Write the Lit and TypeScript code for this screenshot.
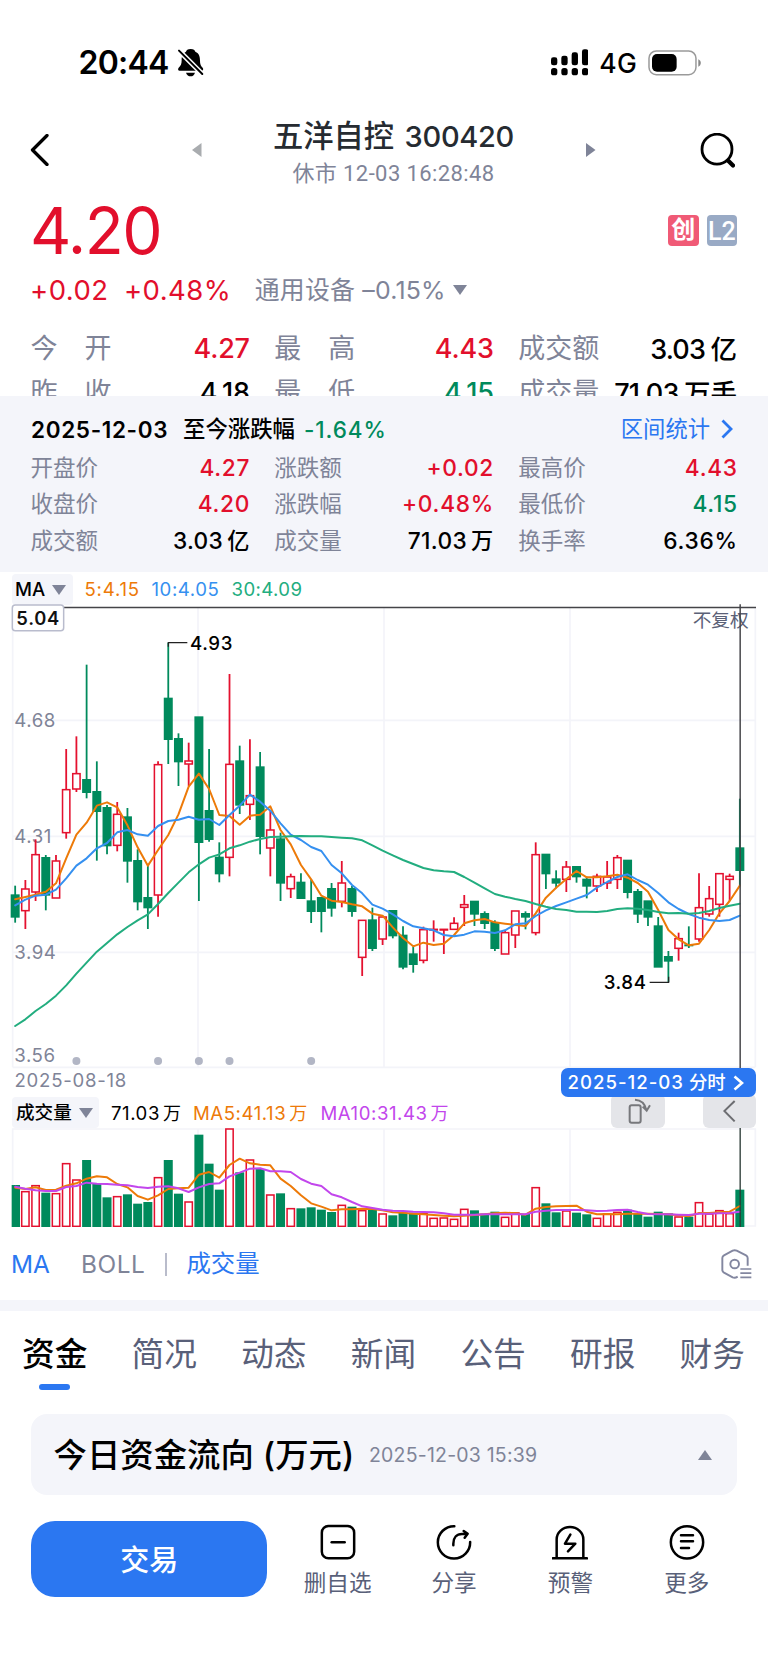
import { LitElement, html, svg, css } from "lit";
import { customElement } from "lit/decorators.js";

type Tone = "up" | "down" | "flat";
/** direction, high, body top, body bottom, low (chart units, three per pixel) */
type Candle = ["u" | "d", number, number, number, number];

const CANDLES: Candle[] = [
  ["d", 857, 884, 952, 968], ["u", 840, 866, 933, 987], ["u", 718, 763, 877, 903], ["d", 765, 772, 886, 931],
  ["u", 765, 782, 895, 895], ["u", 447, 568, 699, 716], ["u", 409, 520, 568, 576], ["d", 194, 538, 578, 595],
  ["d", 484, 574, 635, 782], ["d", 615, 622, 738, 763], ["u", 606, 642, 737, 754], ["d", 624, 650, 784, 848],
  ["d", 748, 781, 906, 931], ["d", 797, 892, 924, 987], ["u", 484, 493, 886, 950], ["d", 128, 294, 419, 492],
  ["d", 400, 415, 486, 558], ["u", 428, 482, 493, 558], ["d", 350, 350, 728, 903], ["d", 447, 631, 719, 725],
  ["d", 727, 771, 822, 847], ["u", 222, 492, 773, 829], ["d", 437, 482, 616, 642], ["u", 418, 586, 614, 660],
  ["d", 456, 500, 710, 763], ["u", 632, 689, 745, 829], ["d", 698, 716, 850, 903], ["u", 821, 829, 867, 894],
  ["d", 820, 846, 896, 896], ["d", 838, 902, 935, 969], ["d", 892, 892, 935, 997], ["d", 849, 865, 925, 950],
  ["u", 783, 848, 905, 922], ["d", 858, 865, 935, 950], ["u", 960, 960, 1073, 1128], ["d", 923, 959, 1046, 1053],
  ["u", 950, 950, 1018, 1035], ["d", 931, 931, 1008, 1015], ["d", 979, 1005, 1102, 1108], ["d", 1040, 1061, 1094, 1118],
  ["u", 980, 988, 1082, 1090], ["u", 961, 987, 991, 1025], ["u", 987, 987, 991, 1062], ["u", 952, 969, 989, 989],
  ["u", 885, 913, 923, 978], ["d", 903, 903, 943, 978], ["d", 934, 940, 971, 987], ["d", 961, 967, 1046, 1053],
  ["u", 990, 997, 1063, 1063], ["u", 932, 932, 1006, 1044], ["d", 934, 940, 952, 988], ["u", 727, 763, 999, 1006],
  ["d", 762, 762, 822, 867], ["d", 811, 836, 850, 865], ["u", 783, 800, 839, 876], ["d", 799, 799, 831, 848],
  ["d", 830, 837, 859, 895], ["u", 821, 828, 859, 876], ["u", 783, 830, 850, 867], ["u", 765, 772, 839, 867],
  ["d", 780, 780, 878, 895], ["d", 867, 874, 943, 969], ["d", 902, 902, 952, 978], ["d", 951, 977, 1102, 1102],
  ["d", 1053, 1069, 1084, 1146], ["u", 998, 1015, 1046, 1082], ["d", 979, 1034, 1038, 1044], ["u", 820, 922, 1018, 1025],
  ["u", 858, 895, 943, 950], ["u", 820, 820, 914, 950], ["u", 821, 828, 839, 903], ["d", 596, 743, 812, 857],
];

const MA5 = [898, 891, 884, 875, 850, 775, 704, 668, 617, 607, 622, 676, 742, 797, 750, 705, 643, 560, 521, 567, 645, 648, 674, 647, 644, 619, 690, 733, 795, 838, 887, 902, 906, 913, 919, 941, 947, 982, 1014, 1039, 1028, 1035, 1031, 1005, 970, 961, 957, 967, 971, 975, 978, 940, 893, 863, 837, 813, 832, 832, 829, 824, 833, 849, 875, 930, 990, 1018, 1036, 1031, 990, 940, 903, 857];
const MA10 = [916, 899, 887, 884, 869, 835, 797, 775, 745, 729, 697, 690, 703, 707, 678, 663, 659, 650, 659, 657, 675, 645, 617, 584, 605, 632, 670, 704, 720, 741, 753, 795, 820, 855, 880, 914, 926, 943, 963, 979, 985, 991, 1005, 1009, 1004, 994, 995, 999, 991, 973, 970, 948, 931, 918, 907, 896, 885, 863, 846, 831, 823, 840, 854, 879, 907, 927, 942, 953, 960, 963, 960, 947];
const MA30 = [1278, 1258, 1233, 1212, 1187, 1156, 1121, 1088, 1055, 1029, 1003, 981, 961, 943, 912, 879, 848, 817, 793, 773, 763, 745, 736, 725, 717, 711, 710, 709, 708, 709, 709, 711, 713, 715, 721, 736, 752, 766, 780, 792, 804, 811, 814, 816, 831, 848, 865, 882, 890, 897, 903, 912, 920, 927, 930, 935, 935, 936, 933, 927, 925, 926, 930, 936, 940, 939, 941, 939, 933, 924, 917, 911];
const VOL = [376, 393, 375, 399, 399, 309, 358, 301, 371, 413, 408, 404, 432, 427, 351, 301, 402, 424, 225, 312, 390, 205, 338, 298, 328, 403, 401, 444, 446, 443, 450, 457, 434, 441, 450, 450, 460, 467, 459, 459, 459, 473, 472, 476, 446, 452, 462, 456, 470, 457, 463, 381, 431, 458, 451, 459, 464, 473, 460, 455, 450, 461, 471, 456, 461, 469, 471, 426, 460, 450, 459, 390];
const VMA5 = [383, 387, 382, 390, 389, 377, 370, 356, 349, 352, 372, 382, 408, 419, 406, 387, 385, 383, 344, 336, 353, 315, 296, 310, 314, 316, 356, 378, 406, 430, 440, 451, 448, 448, 446, 447, 451, 457, 458, 461, 463, 465, 467, 469, 467, 465, 463, 460, 458, 460, 464, 446, 441, 439, 438, 437, 455, 463, 462, 463, 461, 461, 461, 462, 463, 466, 469, 459, 459, 457, 455, 438];
const VMA10 = [380, 386, 391, 393, 393, 381, 378, 368, 371, 372, 374, 376, 381, 384, 380, 379, 385, 396, 382, 372, 370, 349, 338, 326, 325, 334, 334, 336, 357, 371, 378, 403, 412, 426, 439, 444, 449, 452, 453, 455, 456, 457, 460, 464, 464, 464, 463, 463, 463, 463, 463, 455, 452, 450, 450, 450, 451, 453, 452, 450, 449, 456, 462, 463, 463, 464, 465, 461, 461, 460, 459, 455];

const cx = (i: number) => 45.5 + i * 30.62;
const poly = (ys: number[]) => ys.map((y, i) => `${cx(i).toFixed(1)},${y}`).join(" ");

@customElement("price-chart")
class PriceChart extends LitElement {
  static styles = css`
    :host { display: block; height: 461px; }
    svg { display: block; overflow: visible; font-family: Inter, "Noto Sans CJK SC", sans-serif; }
    .grid { stroke: #f3f4f9; stroke-width: 5; fill: none; }
    .u { fill: none; stroke: #e4112f; stroke-width: 4.6; }
    .d { fill: #008a5c; }
    .wu { stroke: #e4112f; stroke-width: 5.4; }
    .wd { stroke: #008a5c; stroke-width: 5.4; }
    .ma { fill: none; stroke-width: 6; stroke-linejoin: round; stroke-linecap: round; }
    .a { stroke: #ed7a08; }
    .b { stroke: #3590f0; }
    .c { stroke: #22ad7f; }
    .axis { fill: #7f8497; font-size: 56px; letter-spacing: 1.6px; }
    .mark { fill: #000; font-size: 56px; font-weight: 500; letter-spacing: 1.8px; }
    .lead { stroke: #222; stroke-width: 3.6; fill: none; }
    .cross { stroke: #444448; stroke-width: 4.4; }
    .dot { fill: #b2b6c5; }
    .max { fill: #fff; stroke: #b9bccd; stroke-width: 4.5; }
    .maxt { fill: #111; font-size: 55px; font-weight: 600; letter-spacing: 2.2px; }
    .adj { fill: #5b6177; font-size: 56px; }
  `;
  render() {
    return html`<svg width="768" height="461" viewBox="0 21 2304 1383">
      <path class="grid" d="M38 21V1402M594 21V1402M1152 21V1402M1710 21V1402M2266 21V1402M38 361H2266M38 709H2266M38 1057H2266M38 1402H2266" />
      ${[["4.68", 381], ["4.31", 730], ["3.94", 1078], ["3.56", 1387]].map(([t, y]) => svg`<text class="axis" x="43" y=${y}>${t}</text>`)}
      ${CANDLES.map(([k, h, t, b, l], i) => svg`
        ${h < t ? svg`<line class="w${k}" x1=${cx(i)} x2=${cx(i)} y1=${h} y2=${t + 1} />` : ""}
        ${l > b ? svg`<line class="w${k}" x1=${cx(i)} x2=${cx(i)} y1=${b - 1} y2=${l} />` : ""}
        ${k === "u"
          ? svg`<rect class="u" x=${cx(i) - 11} y=${t + 1} width="22" height=${Math.max(1, b - t - 2)} />`
          : svg`<rect class="d" x=${cx(i) - 13.5} y=${t - 1} width="27" height=${b - t + 2} />`}`)}
      <polyline class="ma a" points=${poly(MA5)} />
      <polyline class="ma b" points=${poly(MA10)} />
      <polyline class="ma c" points=${poly(MA30)} />
      <path class="lead" d="M505 140V128H562M2006 1130V1147H1949" />
      <text class="mark" x="570" y="149">4.93</text>
      <text class="mark" x="1811" y="1168">3.84</text>
      ${[6, 14, 18, 21, 29].map((i) => svg`<circle class="dot" cx=${cx(i)} cy="1383" r="12" />`)}
      <text class="adj" x="2078" y="81">不复权</text>
      <line class="cross" x1="38" x2="2268" y1="22.5" y2="22.5" />
      <line class="cross" x1="2220.5" x2="2220.5" y1="13" y2="1404" />
      <rect class="max" x="37" y="15" width="154" height="77" rx="9" />
      <text class="maxt" x="49" y="74">5.04</text>
    </svg>`;
  }
}

@customElement("volume-chart")
class VolumeChart extends LitElement {
  static styles = css`
    :host { display: block; height: 99px; }
    svg { display: block; }
    .grid { stroke: #f3f4f9; stroke-width: 5; fill: none; }
    .u { fill: #fff; stroke: #e4112f; stroke-width: 4.6; }
    .d { fill: #008a5c; }
    .ma { fill: none; stroke-width: 6; stroke-linejoin: round; stroke-linecap: round; }
    .a { stroke: #ed7a08; }
    .b { stroke: #c246ec; }
    .cross { stroke: #2b3a35; stroke-width: 4; }
  `;
  render() {
    return html`<svg width="768" height="99" viewBox="0 204 2304 297">
      <path class="grid" d="M38 207H2266V498H38ZM594 207V498M1152 207V498M1710 207V498" />
      ${VOL.map((y, i) => CANDLES[i][0] === "u"
        ? svg`<rect class="u" x=${cx(i) - 11} y=${y + 2} width="22" height=${497 - y} />`
        : svg`<rect class="d" x=${Math.max(35, cx(i) - 13.5)} y=${y - 1} width=${i ? 27 : 25} height=${502 - y} />`)}
      <polyline class="ma a" points=${poly(VMA5)} />
      <polyline class="ma b" points=${poly(VMA10)} />
      <line class="cross" x1="2220.5" x2="2220.5" y1="204" y2="501" />
    </svg>`;
  }
}

const STATS: [string, string, string, Tone][] = [
  ["今开", "4.27", "", "up"], ["最高", "4.43", "", "up"], ["成交额", "3.03", "亿", "flat"],
  ["昨收", "4.18", "", "flat"], ["最低", "4.15", "", "down"], ["成交量", "71.03", "万手", "flat"],
];
const DAY: [string, string, string, Tone][] = [
  ["开盘价", "4.27", "", "up"], ["涨跌额", "+0.02", "", "up"], ["最高价", "4.43", "", "up"],
  ["收盘价", "4.20", "", "up"], ["涨跌幅", "+0.48%", "", "up"], ["最低价", "4.15", "", "down"],
  ["成交额", "3.03", "亿", "flat"], ["成交量", "71.03", "万", "flat"], ["换手率", "6.36%", "", "flat"],
];
const TABS = ["资金", "简况", "动态", "新闻", "公告", "研报", "财务"];

const ACTIONS = [
  { label: "删自选", box: "89 70 108 108", art: svg`<rect x="94.5" y="76" width="97" height="97" rx="20"/><path d="M124 125H163"/>` },
  { label: "分享", box: "438 70 108 108", art: svg`<path d="M493 76.500A48.500 48.500 0 1 0 540.500 124"/><path d="M490 134V129C490 111 500 100 516 100H530M521 91L533 99.500L524 111"/>` },
  { label: "预警", box: "788 70 108 108", art: svg`<path d="M802 171V116A40 37 0 0 1 882 116V171M790 173H893M843 102L827 129H858L836 152"/>` },
  { label: "更多", box: "1137 70 108 108", art: svg`<circle cx="1191" cy="125" r="48.500"/><path d="M1173 104H1209M1173 122H1209M1173 142H1197"/>` },
];

@customElement("app-root")
class AppRoot extends LitElement {
  static styles = css`
    :host { display: block; width: 768px; height: 1670px; overflow: hidden; background: #fff; color: #000;
      font-family: Inter, "Noto Sans CJK SC", sans-serif; --up: #e20f2c; --down: #008a5c; --grey: #7f8498; --blue: #2b77f1; --pale: #f4f5fa; }
    * { box-sizing: border-box; }
    svg { display: block; flex: none; }
    .up { color: var(--up); } .down { color: var(--down); }

    .status { height: 112px; padding: 13px 67px 0 78.500px; display: flex; align-items: center; }
    .time { font-size: 32px; font-weight: 600; letter-spacing: -.75px; width: 98.500px; }
    .signal { margin-left: auto; }
    .net { font-size: 26.500px; font-weight: 500; letter-spacing: .3px; width: 59.500px; padding-left: 11px; }

    .head { height: 76px; display: flex; align-items: center; padding: 0 33px 0 29.500px; }
    .prev { margin-left: 143px; }
    .title { width: 384px; align-self: flex-start; text-align: center; white-space: nowrap; }
    .name { font-size: 29px; font-weight: 500; line-height: 38px; margin-top: 5px; color: #262b31; letter-spacing: -.3px; }
    .name span { font-size: 30.300px; letter-spacing: 0; margin-right: 3px; }
    .time2 { font-size: 22px; line-height: 34px; color: var(--grey); font-family: Roboto, "Noto Sans CJK SC", sans-serif; letter-spacing: .4px; margin-top: 1px; }
    .find { margin-left: auto; }

    .quote { height: 83px; padding: 0 31px 0 30px; display: flex; align-items: center; justify-content: space-between; }
    .price { font-size: 64px; letter-spacing: -1.500px; line-height: 83px; padding-top: 1px; }
    .badges { display: flex; gap: 8px; margin-bottom: -1px; }
    .badge { width: 30.500px; height: 31px; border-radius: 4px; color: #fff; display: grid; place-items: center; line-height: 30px; }
    .chuang { background: #f05a76; font-size: 24px; font-weight: 700; }
    .l2 { background: #99aac5; font: 500 25px/31px Roboto, sans-serif; padding-top: 1px; }

    .change { height: 38px; padding-left: 30px; display: flex; align-items: center; font-size: 27.500px; line-height: 38px; letter-spacing: .45px; }
    .change .pct { margin-left: 15.500px; }
    .sector { margin-left: 23.500px; font-size: 24.900px; letter-spacing: .2px; color: var(--grey); white-space: pre; margin-right: 7px; }

    .stats { height: 87px; overflow: hidden; padding: 18px 31px 0; display: grid; grid-template-columns: repeat(3, 1fr); column-gap: 25.500px; grid-auto-rows: 43.500px; font-size: 27px; line-height: 44px; }
    .cell { display: flex; justify-content: space-between; white-space: nowrap; }
    .label { color: var(--grey); display: flex; justify-content: space-between; margin-left: -.5px; }
    .stats .label { width: 81px; }
    .val { font-weight: 500; letter-spacing: -.2px; margin-right: -.5px; }
    .val.u { letter-spacing: -.85px; margin-right: 0; }
    .unit { margin-left: 5.500px; letter-spacing: 0; }
    .stats .unit { font-size: 26.500px; }

    .day { height: 176px; background: var(--pale); padding: 15px 31px 0; font-size: 22.500px; }
    .dayhead { height: 37px; display: flex; align-items: center; font-size: 22px; line-height: 35px; font-weight: 500; white-space: nowrap; padding-bottom: 1px; }
    .date { font-weight: 600; font-size: 22.500px; letter-spacing: .65px; width: 152px; }
    .since { width: 121px; font-size: 22.400px; padding-bottom: 1px; }
    .dayhead .down { font-size: 22.500px; letter-spacing: .9px; }
    .link { margin-left: auto; color: var(--blue); font-weight: 400; display: flex; align-items: center; gap: 10px; font-size: 22.300px; margin-right: 3px; padding-bottom: 2px; }
    .link svg { margin-top: 2px; }
    .grid3 { display: grid; grid-template-columns: repeat(3, 1fr); column-gap: 25.500px; grid-auto-rows: 36.700px; line-height: 36.700px; margin-top: 1.500px; }
    .grid3 .val { font-size: 22.700px; letter-spacing: .7px; margin-right: -.8px; }
    .grid3 .val.u { letter-spacing: .35px; margin-right: 0; }
    .grid3 .unit { margin-left: 4px; font-size: 22.200px; letter-spacing: 0; }

    .legend { height: 35px; padding: 2px 0 0 12px; display: flex; align-items: flex-start; font-size: 18.600px; line-height: 31px; white-space: nowrap; }
    .chip { background: var(--pale); border-radius: 4px; height: 31px; display: flex; align-items: center; font-weight: 500; }
    .chip.ma { width: 60.500px; padding-left: 3px; gap: 7px; letter-spacing: 0; }
    .chip.vo { width: 87px; padding-left: 4px; gap: 7px; font-size: 18.600px; }
    .k5 { color: #ed7a08; width: 67px; margin-left: 12px; letter-spacing: .8px; }
    .k10 { color: #3590f0; width: 80px; letter-spacing: .55px; }
    .k30 { color: #22ad7f; letter-spacing: .4px; }

    .dates { height: 30px; display: flex; justify-content: space-between; padding: 0 12px 0 14.500px; font-size: 18.600px; letter-spacing: .75px; color: var(--grey); line-height: 25px; }
    .pill { position: relative; width: 195px; height: 29px; border-radius: 7px; background: var(--blue); color: #fff; font-weight: 500; letter-spacing: 1px; line-height: 29px; padding-left: 6.500px; display: flex; align-items: center; }
    .pill b { font-weight: 500; font-size: 18.400px; letter-spacing: 0; margin: 0 7px 0 5px; }
    .vlegend { height: 30px; padding: 0 12px; display: flex; align-items: flex-start; font-size: 18.600px; line-height: 31px; letter-spacing: .55px; white-space: nowrap; }
    .vlegend .chip { letter-spacing: 0; margin-top: -1px; }
    .vlegend i { font-style: normal; font-size: 18px; margin-left: 3px; letter-spacing: 0; }
    .v1 { margin-left: 12px; width: 82px; } .v5 { color: #ed7a08; width: 127.500px; } .v10 { color: #c246ec; }
    .btn { width: 53.500px; height: 34px; margin-top: -4px; border-radius: 6px; background: #e4e5e9; display: grid; place-items: center; }
    .turn { margin-left: auto; margin-right: 38px; }
    .turn svg { margin: -1px 0 0 4px; }

    .inds { height: 73px; padding: 1px 16px 0 11px; display: flex; align-items: center; font-size: 24.400px; line-height: 34px; color: var(--grey); }
    .inds .on { color: var(--blue); }
    .inds .boll { margin-left: 31px; letter-spacing: .6px; }
    .inds .vol { margin-top: -2.500px; }
    .bar { width: 2px; height: 23px; background: #b9bccb; margin: 0 19px 0 20px; }
    .gear { margin-left: auto; margin-top: -1px; }
    .band { height: 11px; background: var(--pale); }

    .tabs { height: 103px; padding: 1.500px 23px 0 22px; display: flex; justify-content: space-between; font-size: 32.700px; line-height: 83px; color: #596079; }
    .tab.on { color: #000; font-weight: 500; display: flex; flex-direction: column; align-items: center; }
    .tab.on::after { content: ""; width: 31px; height: 6px; border-radius: 3px; background: var(--blue); margin-top: -11.500px; }

    .card { margin: 0 31px; height: 81px; border-radius: 16px; background: var(--pale); display: flex; align-items: center; padding: 0 25px 0 22.500px; white-space: nowrap; }
    .card h2 { margin: -4px 0 0; font-size: 33.400px; font-weight: 500; width: 315.500px; display: flex; align-items: center; }
    .card h2 span { margin-left: 9px; }
    .when { font-size: 19.500px; letter-spacing: .2px; color: var(--grey); }
    .card svg { margin-left: auto; }

    .foot { display: flex; padding: 25.500px 23px 0 31px; }
    .trade { width: 236.500px; height: 76.500px; border-radius: 24px; background: var(--blue); color: #fff; font-size: 29px; font-weight: 500; display: grid; place-items: center; margin-right: 12px; padding-bottom: 2.500px; }
    .act { width: 116.400px; display: flex; flex-direction: column; align-items: center; padding-top: 3px; font-size: 22.600px; line-height: 30px; color: #596079; gap: 8.500px; }
    .act svg { fill: none; stroke: #000; stroke-width: 7.500; stroke-linecap: round; stroke-linejoin: round; }
  `;

  private cell([label, num, unit, tone]: [string, string, string, Tone]) {
    return html`<div class="cell">
      <span class="label">${[...label].map((c) => html`<span>${c}</span>`)}</span>
      <span class="val ${tone} ${unit ? "u" : ""}">${num}${unit ? html`<span class="unit">${unit}</span>` : ""}</span>
    </div>`;
  }

  render() {
    return html`
      <div class="status">
        <span class="time">20:44</span>
        <svg width="27.300" height="29.300" viewBox="350 40 82 88">
          <path d="M391 43c9 0 13 4 14 8c12 5 14 16 14 26c0 12 3 18 8 22c3 3 2 9-3 9H358c-5 0-6-5-3-9c6-5 9-11 9-22c0-12 3-21 13-26c1-4 5-8 14-8z" />
          <path d="M377 114h27c-2 7-7 11-13 11s-12-4-14-11z" />
          <path d="M348 40L432 124" stroke="#fff" stroke-width="15" />
          <path d="M356 48L426 118" stroke="#000" stroke-width="6" stroke-linecap="round" />
        </svg>
        <svg class="signal" width="37.300" height="26.700" viewBox="62 42 112 80">
          ${[[62, 67], [93, 62], [124, 52], [155, 43]].map(([x, y]) => svg`<rect x=${x} y=${y} width="19" height=${91 - y} rx="7"/><rect x=${x} y="99" width="19" height="22" rx="8"/>`)}
        </svg>
        <span class="net">4G</span>
        <svg width="53.300" height="26" viewBox="353 43 160 78">
          <rect x="356" y="46" width="141" height="71" rx="22" fill="none" stroke="#9a9a9a" stroke-width="4.500" />
          <rect x="365" y="55" width="74" height="53" rx="15" />
          <path d="M504 71c10 4 10 18 0 22z" fill="#888" />
        </svg>
      </div>

      <div class="head">
        <svg width="19" height="32" viewBox="0 0 19 32"><path d="M17 1.500L2.500 16L17 30.500" fill="none" stroke="#000" stroke-width="3.300" stroke-linecap="round" stroke-linejoin="round" /></svg>
        <svg class="prev" width="10" height="14" viewBox="0 0 10 14"><path d="M9.500 0V14L0 7z" fill="#a9acaf" /></svg>
        <div class="title">
          <div class="name"><span>五洋自控</span> 300420</div>
          <div class="time2">休市 12-03 16:28:48</div>
        </div>
        <svg width="10" height="14" viewBox="0 0 10 14"><path d="M0 0V14L9.500 7z" fill="#7f8498" /></svg>
        <svg class="find" width="35" height="35" viewBox="0 0 35 35"><circle cx="17" cy="16.200" r="15" fill="none" stroke="#000" stroke-width="2.800" /><path d="M28.500 28L33 32.500" stroke="#000" stroke-width="4.200" stroke-linecap="round" /></svg>
      </div>

      <div class="quote">
        <span class="price up">4.20</span>
        <div class="badges"><span class="badge chuang">创</span><span class="badge l2">L2</span></div>
      </div>
      <div class="change">
        <span class="up">+0.02</span><span class="up pct">+0.48%</span>
        <span class="sector">通用设备 –0.15%</span>
        <svg width="14" height="10" viewBox="0 0 14 10"><path d="M0 0H14L7 10z" fill="#7f8498" /></svg>
      </div>
      <div class="stats">${STATS.map((s) => this.cell(s))}</div>

      <div class="day">
        <div class="dayhead">
          <span class="date">2025-12-03</span><span class="since">至今涨跌幅</span><span class="down">-1.64%</span>
          <span class="link">区间统计<svg width="14" height="20" viewBox="0 0 14 20"><path d="M2.500 1.500L11 10L2.500 18.500" fill="none" stroke="#2b77f1" stroke-width="2.800" /></svg></span>
        </div>
        <div class="grid3">${DAY.map((s) => this.cell(s))}</div>
      </div>

      <div class="legend">
        <span class="chip ma">MA<svg width="14" height="10" viewBox="0 0 14 10"><path d="M0 0H14L7 10z" fill="#7f8498" /></svg></span>
        <span class="k5">5:4.15</span><span class="k10">10:4.05</span><span class="k30">30:4.09</span>
      </div>
      <price-chart></price-chart>
      <div class="dates">
        <span>2025-08-18</span>
        <span class="pill">2025-12-03<b>分时</b><svg width="11" height="16" viewBox="0 0 11 16"><path d="M1.500 1.500L9 8L1.500 14.500" fill="none" stroke="#fff" stroke-width="2.600" /></svg></span>
      </div>
      <div class="vlegend">
        <span class="chip vo">成交量<svg width="14" height="10" viewBox="0 0 14 10"><path d="M0 0H14L7 10z" fill="#7f8498" /></svg></span>
        <span class="v1">71.03<i>万</i></span><span class="v5">MA5:41.13<i>万</i></span><span class="v10">MA10:31.43<i>万</i></span>
        <span class="btn turn"><svg width="23" height="26" viewBox="745 113 69 78" fill="none" stroke="#77787c" stroke-width="6"><rect x="750" y="135" width="33" height="52" rx="6" /><path d="M766 118C784 119 796 130 800 149M789 139L801 151L811 135" /></svg></span>
        <span class="btn"><svg width="13" height="22" viewBox="1030 119 39 66" fill="none" stroke="#6c6d71" stroke-width="6"><path d="M1065 122L1034 152L1065 183" /></svg></span>
      </div>
      <volume-chart></volume-chart>

      <div class="inds">
        <span class="on">MA</span><span class="boll">BOLL</span><span class="bar"></span><span class="on vol">成交量</span>
        <svg class="gear" width="31" height="30" viewBox="1021 565 93 90" fill="none" stroke="#8387a0" stroke-width="5.800">
          <path d="M1101 615V592Q1101 587 1096 584L1068 570Q1062 567 1056 570L1030 584Q1025 587 1025 592V628Q1025 633 1030 636L1056 650Q1063 653 1071 648" /><circle cx="1062" cy="610" r="13" />
          <path d="M1079 625H1112M1079 637.500H1112M1079 650H1112" stroke-width="5" />
        </svg>
      </div>
      <div class="band"></div>
      <div class="tabs">${TABS.map((t, i) => html`<span class="tab ${i ? "" : "on"}">${t}</span>`)}</div>
      <div class="card">
        <h2>今日资金流向<span>(万元)</span></h2><span class="when">2025-12-03 15:39</span>
        <svg width="14" height="10" viewBox="0 0 14 10"><path d="M0 10H14L7 0z" fill="#7f8498" /></svg>
      </div>
      <div class="foot">
        <div class="trade">交易</div>
        ${ACTIONS.map((a) => html`<div class="act"><svg width="36" height="36" viewBox=${a.box}>${a.art}</svg>${a.label}</div>`)}
      </div>
    `;
  }
}
